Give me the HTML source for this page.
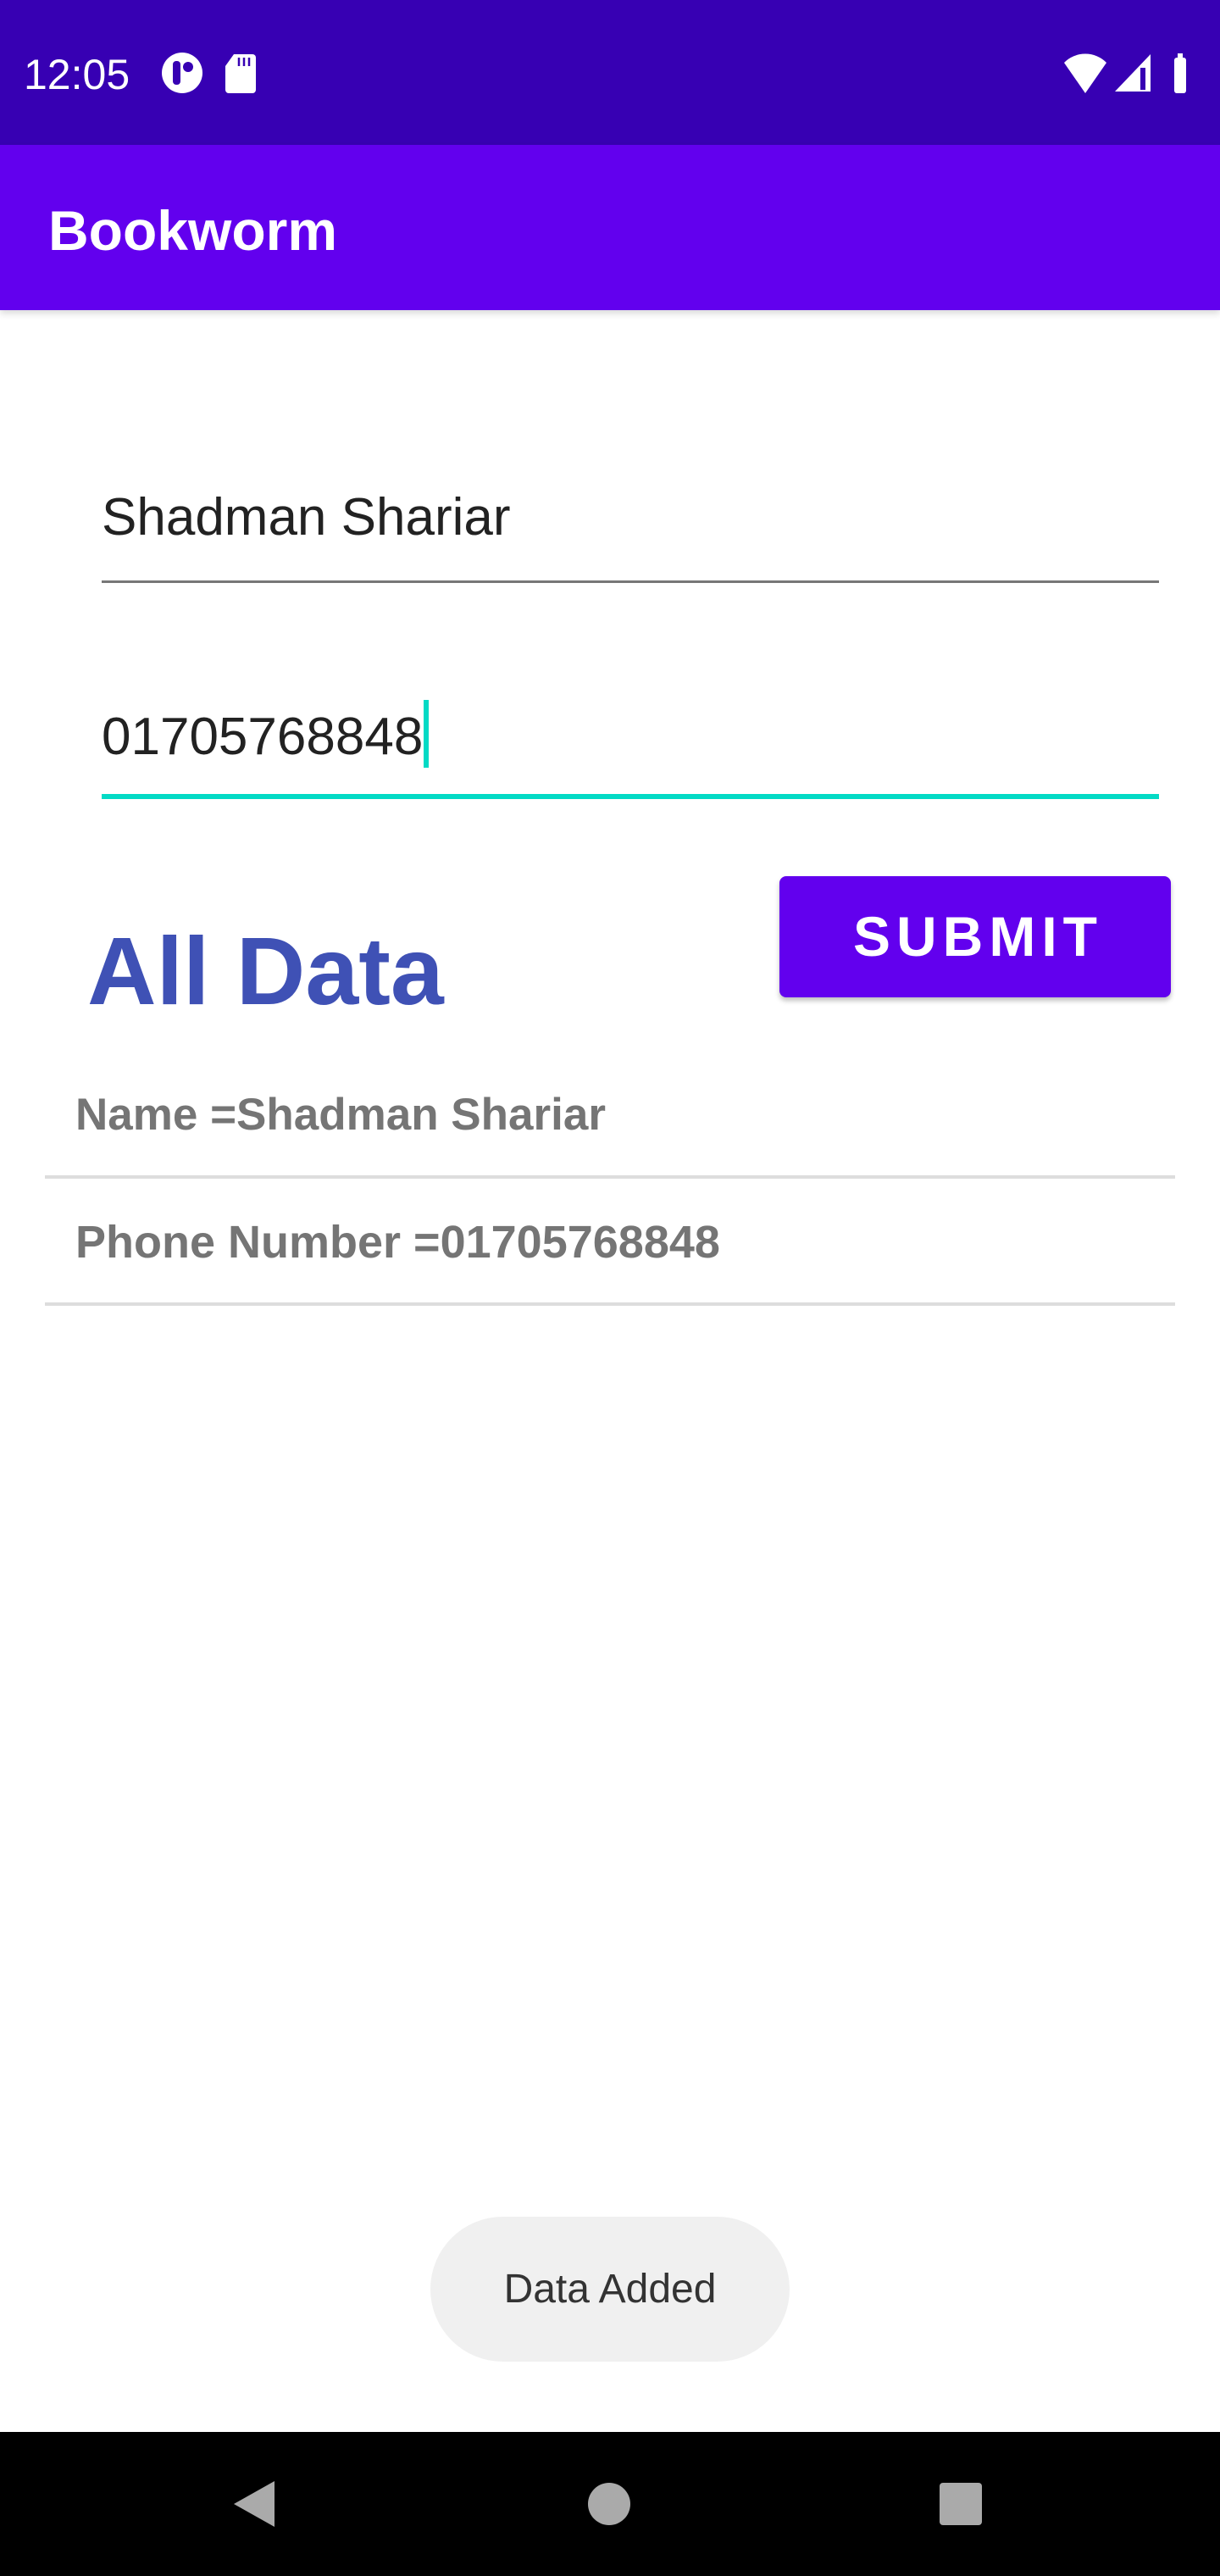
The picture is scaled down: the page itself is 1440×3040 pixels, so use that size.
<!DOCTYPE html>
<html><head><meta charset="utf-8"><style>
*{margin:0;padding:0;box-sizing:border-box}
body{width:1440px;height:3040px;position:relative;background:#fff;font-family:"Liberation Sans",sans-serif;overflow:hidden}
.abs{position:absolute}
</style></head><body>
<div class="abs" style="left:0;top:0;width:1440px;height:171px;background:#3700b3"></div>
<div class="abs" style="left:28px;top:59px;font-size:50px;color:#fff;line-height:58px">12:05</div>
<svg class="abs" style="left:190px;top:60px" width="120" height="56" viewBox="0 0 120 56">
<circle cx="25" cy="26" r="24" fill="#fff"/><rect x="14" y="12" width="9" height="28" rx="4" fill="#3700b3"/><circle cx="32" cy="19" r="6" fill="#3700b3"/>
<path d="M86 4h22a4 4 0 0 1 4 4v38a4 4 0 0 1-4 4H80a4 4 0 0 1-4-4V18z" fill="#fff"/><path d="M92 8v10M98 8v10M104 8v10" stroke="#3700b3" stroke-width="2.5"/>
</svg>
<svg class="abs" style="left:1250px;top:60px" width="170" height="56" viewBox="0 0 170 56">
<path d="M6 14a35 35 0 0 1 50 0L31 50z" fill="#fff"/>
<path d="M108 4v44H66z" fill="#fff"/><rect x="96" y="20" width="6" height="26" fill="#3700b3"/>
<rect x="136" y="8" width="14" height="42" rx="3" fill="#fff"/><rect x="140" y="3" width="6" height="6" fill="#fff"/>
</svg>
<div class="abs" style="left:0;top:171px;width:1440px;height:195px;background:#6200ee;box-shadow:0 4px 8px rgba(0,0,0,.15)"></div>
<div class="abs" style="left:57px;top:232px;font-size:66px;color:#fff;line-height:80px;font-weight:bold">Bookworm</div>

<div class="abs" style="left:120px;top:573px;font-size:62px;color:#222;line-height:76px">Shadman Shariar</div>
<div class="abs" style="left:120px;top:685px;width:1248px;height:3px;background:#777"></div>
<div class="abs" style="left:120px;top:826px;font-size:62px;color:#222;line-height:76px">01705768848<span style="display:inline-block;width:6px;height:80px;background:#03dac5;vertical-align:-16px;margin-left:1px"></span></div>
<div class="abs" style="left:120px;top:937px;width:1248px;height:6px;background:#03dac5"></div>

<div class="abs" style="left:920px;top:1034px;width:462px;height:143px;background:#6200ee;border-radius:8px;box-shadow:0 4px 6px rgba(0,0,0,.25);color:#fff;font-size:66px;font-weight:bold;letter-spacing:7px;text-align:center;line-height:143px;padding-left:7px">SUBMIT</div>
<div class="abs" style="left:103px;top:1076px;font-size:113px;font-weight:bold;color:#3f51b5;line-height:140px">All Data</div>

<div class="abs" style="left:89px;top:1284px;font-size:53px;font-weight:bold;color:#757575;line-height:64px">Name =Shadman Shariar</div>
<div class="abs" style="left:53px;top:1387px;width:1334px;height:4px;background:#ddd"></div>
<div class="abs" style="left:89px;top:1434px;font-size:54px;font-weight:bold;color:#757575;line-height:64px">Phone Number =01705768848</div>
<div class="abs" style="left:53px;top:1537px;width:1334px;height:4px;background:#ddd"></div>

<div class="abs" style="left:508px;top:2616px;width:424px;height:171px;background:#f0f0f0;border-radius:86px;font-size:48px;color:#333;text-align:center;line-height:171px">Data Added</div>

<div class="abs" style="left:0;top:2870px;width:1440px;height:170px;background:#000"></div>
<svg class="abs" style="left:0;top:2870px" width="1440" height="170" viewBox="0 0 1440 170">
<path d="M324 58v54L276 85z" fill="#aaa"/>
<circle cx="719" cy="85" r="25" fill="#aaa"/>
<rect x="1109" y="60" width="50" height="50" rx="4" fill="#aaa"/>
</svg>
</body></html>
